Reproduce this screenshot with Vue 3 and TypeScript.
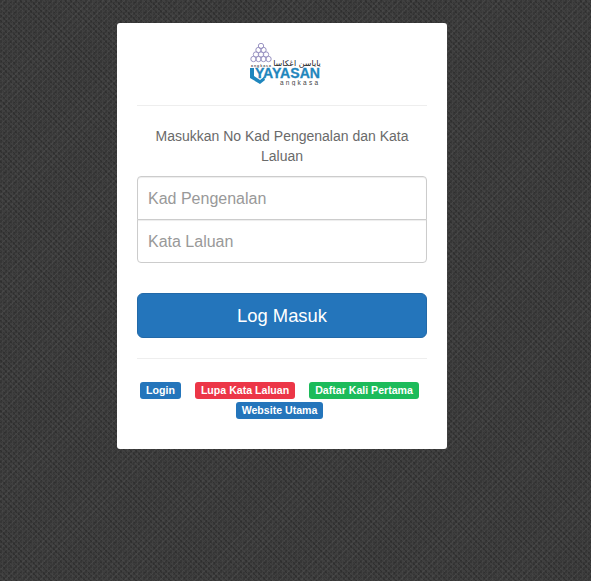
<script setup lang="ts">
const links: { text: string; tone: string }[] = [
  { text: 'Login', tone: 'blue' },
  { text: 'Lupa Kata Laluan', tone: 'red' },
  { text: 'Daftar Kali Pertama', tone: 'green' },
  { text: 'Website Utama', tone: 'blue' },
]
const rings: [number, number][] = [
  [12, 3], [9.5, 7], [14.5, 7], [7, 11.5], [12, 11.5], [17, 11.5], [4.5, 16], [9.5, 16], [14.5, 16], [19.5, 16],
]
</script>

<template>
  <main class="page">
    <section class="card">
      <div class="logo">
        <svg class="logo-svg" width="72" height="43" viewBox="0 0 72 43">
          <g fill="none" stroke="#9a94c2" stroke-width="1">
            <circle v-for="(r, i) in rings" :key="i" :cx="r[0]" :cy="r[1]" r="2.7" />
          </g>
          <text x="2" y="24" class="tiny" textLength="20">angkasa</text>
          <text x="48" y="22.5" class="jawi" text-anchor="middle">ياياسن اڠكاسا</text>
          <path d="M1 25h4v8l6 4 4-3 1 3-5 4-10-6z" fill="#1f86bd" />
          <text x="6" y="35" class="brand" textLength="65" lengthAdjust="spacingAndGlyphs">YAYASAN</text>
          <text x="31" y="42" class="sub" textLength="38">angkasa</text>
        </svg>
      </div>
      <hr class="rule" />
      <p class="lead">Masukkan No Kad Pengenalan dan Kata Laluan</p>
      <form class="form" @submit.prevent>
        <input class="field first" type="text" placeholder="Kad Pengenalan" />
        <input class="field last" type="password" placeholder="Kata Laluan" />
        <button class="submit" type="submit">Log Masuk</button>
      </form>
      <hr class="rule lower" />
      <nav class="links">
        <a v-for="l in links" :key="l.text" class="badge" :class="l.tone" href="#">{{ l.text }}</a>
      </nav>
    </section>
  </main>
</template>

<style>
html, body { margin: 0; padding: 0; background: #353535; }
</style>

<style scoped>
.page {
  box-sizing: border-box;
  width: 100%;
  min-height: 581px;
  padding: 23px 0 0 117px;
  display: flex;
  align-items: flex-start;
  font-family: "Liberation Sans", Arial, sans-serif;
  background-color: #363636;
  background-image:
    conic-gradient(rgba(255, 255, 255, 0.05) 25%, transparent 0 50%, rgba(255, 255, 255, 0.05) 0 75%, transparent 0),
    repeating-linear-gradient(45deg, rgba(0, 0, 0, 0.12) 0 1px, transparent 1px 4px),
    repeating-linear-gradient(-45deg, rgba(255, 255, 255, 0.03) 0 1px, transparent 1px 5px);
  background-size: 5px 5px, auto, auto;
}
.card {
  box-sizing: border-box;
  width: 330px;
  height: 426px;
  padding: 20px;
  background: #fff;
  border-radius: 3px;
}
.logo { height: 42px; display: flex; justify-content: center; padding-left: 5px; }
.logo-svg { display: block; height: 43px; }
.tiny { font-size: 3.5px; font-weight: 700; fill: #555; }
.jawi { font-family: "DejaVu Sans", sans-serif; font-size: 8px; fill: #222; }
.brand { font-size: 14px; font-weight: 700; fill: #1f86bd; stroke: #1f86bd; stroke-width: 0.3px; }
.sub { font-size: 6.5px; fill: #444; }
.rule { border: 0; border-top: 1px solid #eee; margin: 20px 0 0; }
.lead {
  margin: 20px 0 0;
  padding: 0 10px;
  font-size: 14px;
  line-height: 20px;
  color: #6a6a6a;
  text-align: center;
}
.form { display: flex; flex-direction: column; margin-top: 10px; }
.field {
  box-sizing: border-box;
  width: 100%;
  height: 44px;
  padding: 1px 10px 0;
  border: 1px solid #ccc;
  background: #fff;
  font: 16px "Liberation Sans", Arial, sans-serif;
  color: #555;
  outline: none;
  box-shadow: inset 0 1px 1px rgba(0, 0, 0, 0.075);
}
.field::placeholder { color: #999; opacity: 1; }
.first { border-radius: 4px 4px 0 0; }
.last { border-radius: 0 0 4px 4px; margin-top: -1px; }
.submit {
  height: 45px;
  margin-top: 30px;
  border: 1px solid #2269a8;
  border-radius: 6px;
  background: #2475bb;
  color: #fff;
  font: 18.4px "Liberation Sans", Arial, sans-serif;
  cursor: pointer;
}
.lower { margin-top: 20px; }
.links {
  display: flex;
  flex-wrap: wrap;
  justify-content: center;
  gap: 3px 14px;
  padding-right: 5px;
  margin-top: 23px;
}
.badge {
  height: 17px;
  padding: 0 6px;
  border-radius: 3px;
  font-size: 10.6px;
  font-weight: 700;
  line-height: 17px;
  color: #fff;
  text-decoration: none;
  white-space: nowrap;
}
.blue { background: #2475bb; }
.red { background: #ec3647; }
.green { background: #1cbb5a; }
</style>
